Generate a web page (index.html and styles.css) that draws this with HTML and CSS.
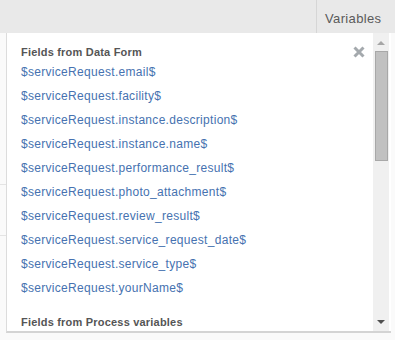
FILE: index.html
```html
<!DOCTYPE html>
<html>
<head>
<meta charset="utf-8">
<link rel="stylesheet" href="styles.css">
</head>
<body>
<div class="page">
  <div class="topbar">
    <div class="topbar-fill"></div>
    <div class="tab">Variables</div>
  </div>
  <div class="main">
    <div class="side">
      <div class="side-row r1"></div>
      <div class="side-row r2"></div>
    </div>
    <div class="popup">
      <div class="content">
        <button class="close" aria-label="close">
          <svg width="12" height="12" viewBox="0 0 12 12"><path d="M1.5 1.5 L10.5 10.5 M10.5 1.5 L1.5 10.5" stroke="#a4a9ad" stroke-width="3" stroke-linecap="butt"/></svg>
        </button>
        <div class="group-title">Fields from Data Form</div>
        <ul class="vars">
          <li><a>$serviceRequest.email$</a></li>
          <li><a>$serviceRequest.facility$</a></li>
          <li><a>$serviceRequest.instance.description$</a></li>
          <li><a>$serviceRequest.instance.name$</a></li>
          <li><a>$serviceRequest.performance_result$</a></li>
          <li><a>$serviceRequest.photo_attachment$</a></li>
          <li><a>$serviceRequest.review_result$</a></li>
          <li><a>$serviceRequest.service_request_date$</a></li>
          <li><a>$serviceRequest.service_type$</a></li>
          <li><a>$serviceRequest.yourName$</a></li>
        </ul>
        <div class="group-title second">Fields from Process variables</div>
      </div>
      <div class="scrollbar">
        <div class="arrow up"></div>
        <div class="thumb"></div>
        <div class="track-rest"></div>
        <div class="arrow down"></div>
      </div>
    </div>
  </div>
</div>
</body>
</html>
```
FILE: styles.css
```css
html, body {
  margin: 0;
  padding: 0;
  background: #ffffff;
  font-family: "Liberation Sans", Arial, sans-serif;
}
.page {
  width: 395px;
  height: 340px;
  display: flex;
  flex-direction: column;
  overflow: hidden;
}
.topbar {
  height: 33px;
  background: #e9e9e9;
  display: flex;
  flex-shrink: 0;
}
.topbar-fill {
  flex: 0 0 316px;
  border-right: 1px solid #d6d6d6;
}
.tab {
  flex: 1;
  padding-left: 8px;
  font-size: 13px;
  letter-spacing: 0.35px;
  line-height: 37px;
  color: #5a5a5a;
}
.main {
  display: flex;
  flex: 1;
  background: #fafafa;
}
.side {
  width: 6px;
  flex-shrink: 0;
  display: flex;
  flex-direction: column;
}
.side-row {
  border-bottom: 1px solid #e4e4e4;
}
.r1 { height: 151px; }
.r2 { height: 50px; }
.popup {
  width: 384px;
  height: 298px;
  background: #ffffff;
  border-left: 1px solid #dcdcdc;
  border-bottom: 2px solid #d4d4d4;
  display: flex;
}
.content {
  flex: 1;
  position: relative;
  padding: 12px 0 0 14px;
  overflow: hidden;
}
.close {
  position: absolute;
  top: 13px;
  left: 346px;
  width: 12px;
  height: 12px;
  padding: 0;
  border: 0;
  background: none;
  display: flex;
}
.group-title {
  font-size: 11px;
  font-weight: bold;
  letter-spacing: 0.2px;
  line-height: 14px;
  color: #555555;
  margin-bottom: 1px;
}
.group-title.second {
  margin-top: 15px;
}
.vars {
  list-style: none;
  margin: 0;
  padding: 0;
}
.vars li {
  font-size: 12px;
  letter-spacing: 0.3px;
  line-height: 24px;
  height: 24px;
}
.vars a {
  color: #4672b0;
  white-space: nowrap;
}
.scrollbar {
  width: 16px;
  margin-right: 2px;
  background: #f0f0f0;
  display: flex;
  flex-direction: column;
  align-items: center;
}
.arrow {
  width: 0;
  height: 0;
  border-left: 4px solid transparent;
  border-right: 4px solid transparent;
}
.arrow.up {
  margin-top: 8px;
  border-bottom: 4px solid #a6a6a6;
}
.thumb {
  margin-top: 6px;
  width: 11px;
  height: 108px;
  background: #c1c1c1;
  border: 1px solid #a8a8a8;
}
.track-rest {
  flex: 1;
}
.arrow.down {
  margin-bottom: 7px;
  border-top: 4px solid #505050;
}
```
